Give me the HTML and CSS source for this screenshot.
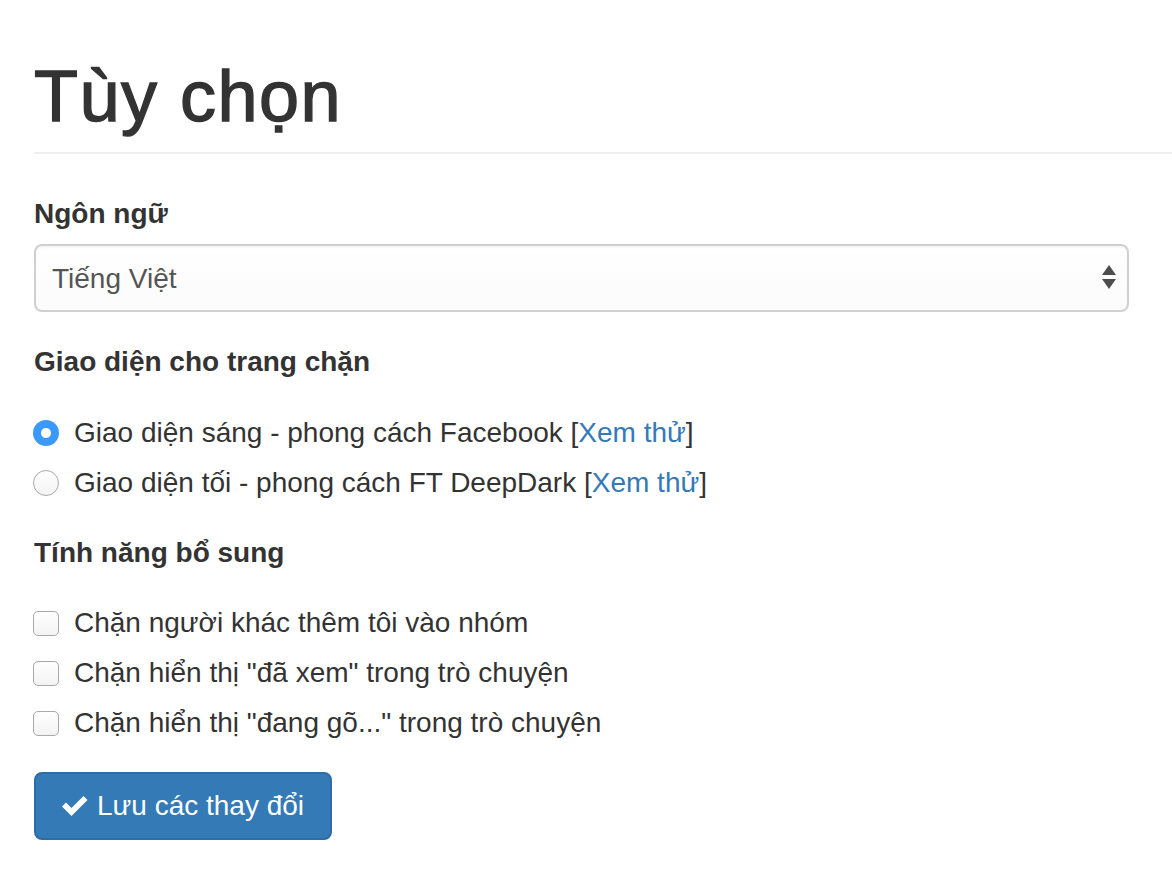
FILE: index.html
```html
<!DOCTYPE html>
<html lang="vi">
<head>
<meta charset="utf-8">
<title>Tùy chọn</title>
<link rel="stylesheet" href="styles.css">
</head>
<body>
<div class="page">
  <div class="page-header">
    <h1>Tùy chọn</h1>
  </div>
  <form class="form">
    <div class="form-group">
      <label class="group-label" for="lang">Ngôn ngữ</label>
      <div class="select-wrap">
        <select id="lang" class="form-control">
          <option>Tiếng Việt</option>
          <option>English</option>
        </select>
        <svg class="select-arrows" width="14" height="25" viewBox="0 0 14 25" aria-hidden="true">
          <polygon points="7,0 14,10 0,10" fill="#4d4d4d"/>
          <polygon points="0,14 14,14 7,24" fill="#4d4d4d"/>
        </svg>
      </div>
    </div>

    <div class="form-group">
      <div class="group-label">Giao diện cho trang chặn</div>
      <label class="option">
        <input type="radio" name="theme" class="radio-input" checked>
        <span>Giao diện sáng - phong cách Facebook [<a href="#" class="link">Xem thử</a>]</span>
      </label>
      <label class="option">
        <input type="radio" name="theme" class="radio-input">
        <span>Giao diện tối - phong cách FT DeepDark [<a href="#" class="link">Xem thử</a>]</span>
      </label>
    </div>

    <div class="form-group group-checks">
      <div class="group-label">Tính năng bổ sung</div>
      <label class="option">
        <input type="checkbox" class="check-input">
        <span>Chặn người khác thêm tôi vào nhóm</span>
      </label>
      <label class="option">
        <input type="checkbox" class="check-input">
        <span>Chặn hiển thị "đã xem" trong trò chuyện</span>
      </label>
      <label class="option">
        <input type="checkbox" class="check-input">
        <span>Chặn hiển thị "đang gõ..." trong trò chuyện</span>
      </label>
    </div>

    <button type="button" class="btn-primary">
      <svg class="icon-ok" width="26" height="24" viewBox="0 0 26 24" aria-hidden="true">
        <polygon points="0,13.5 4,9.5 9.5,15 21.5,3 25.5,7 9.5,23" fill="#fff"/>
      </svg>
      <span>Lưu các thay đổi</span>
    </button>
  </form>
</div>
</body>
</html>
```

FILE: styles.css
```css
html, body {
  margin: 0;
  padding: 0;
  background: #fff;
}

body {
  font-family: "Liberation Sans", Arial, Helvetica, sans-serif;
  font-size: 28px;
  line-height: 40px;
  color: #333;
}

.page {
  padding-left: 34px;
}

.page-header {
  padding-bottom: 16px;
  border-bottom: 2px solid #eee;
  margin-bottom: 40px;
}

.page-header h1 {
  margin: 57px 0 0;
  font-size: 72px;
  line-height: 79px;
  font-weight: normal;
  color: #333;
  letter-spacing: 1.5px;
  -webkit-text-stroke: 1.4px #333;
}

.form {
  width: 1095px;
}

.form-group {
  margin-bottom: 30px;
}

.group-checks {
  margin-bottom: 29px;
}

.group-label {
  display: block;
  font-weight: bold;
  margin-bottom: 10px;
}

.select-wrap {
  position: relative;
}

.form-control {
  display: block;
  width: 100%;
  height: 68px;
  margin: 0;
  padding: 0 50px 0 16px;
  box-sizing: border-box;
  font-family: inherit;
  font-size: 28px;
  color: #555;
  background: linear-gradient(#ffffff, #fbfbfb);
  border: 2px solid #d0d0d0;
  border-radius: 8px;
  box-shadow: inset 0 2px 2px rgba(0, 0, 0, 0.04);
  -webkit-appearance: none;
  appearance: none;
  outline: none;
}

.select-arrows {
  position: absolute;
  right: 13px;
  top: 21px;
  pointer-events: none;
}

.option {
  display: flex;
  align-items: center;
  height: 40px;
  margin-top: 10px;
  cursor: pointer;
}

.group-label + .option {
  margin-top: 31px;
}

.group-checks .group-label + .option {
  margin-top: 30px;
}

.option:last-child {
  margin-bottom: 20px;
}

.radio-input,
.check-input {
  -webkit-appearance: none;
  appearance: none;
  flex: none;
  width: 26px;
  height: 26px;
  margin: 0 15px 0 -1px;
  box-sizing: border-box;
  border: 1.5px solid #a9a9a9;
  background: linear-gradient(#ffffff, #f3f3f3);
}

.radio-input {
  border-radius: 50%;
}

.radio-input:checked {
  border: none;
  background: radial-gradient(circle, #ffffff 0, #ffffff 4.5px, #3b99fc 5.5px);
}

.check-input {
  border-radius: 5px;
  height: 25px;
}

.link {
  color: #337ab7;
  text-decoration: none;
}

.btn-primary {
  display: inline-flex;
  align-items: center;
  gap: 9px;
  height: 68px;
  padding: 0 26px 0 26px;
  box-sizing: border-box;
  font-family: inherit;
  font-size: 28px;
  line-height: 40px;
  color: #fff;
  background: #337ab7;
  border: 2px solid #2e6da4;
  border-radius: 8px;
  cursor: pointer;
}

.icon-ok {
  display: block;
  flex: none;
  margin-top: -2px;
}
```
